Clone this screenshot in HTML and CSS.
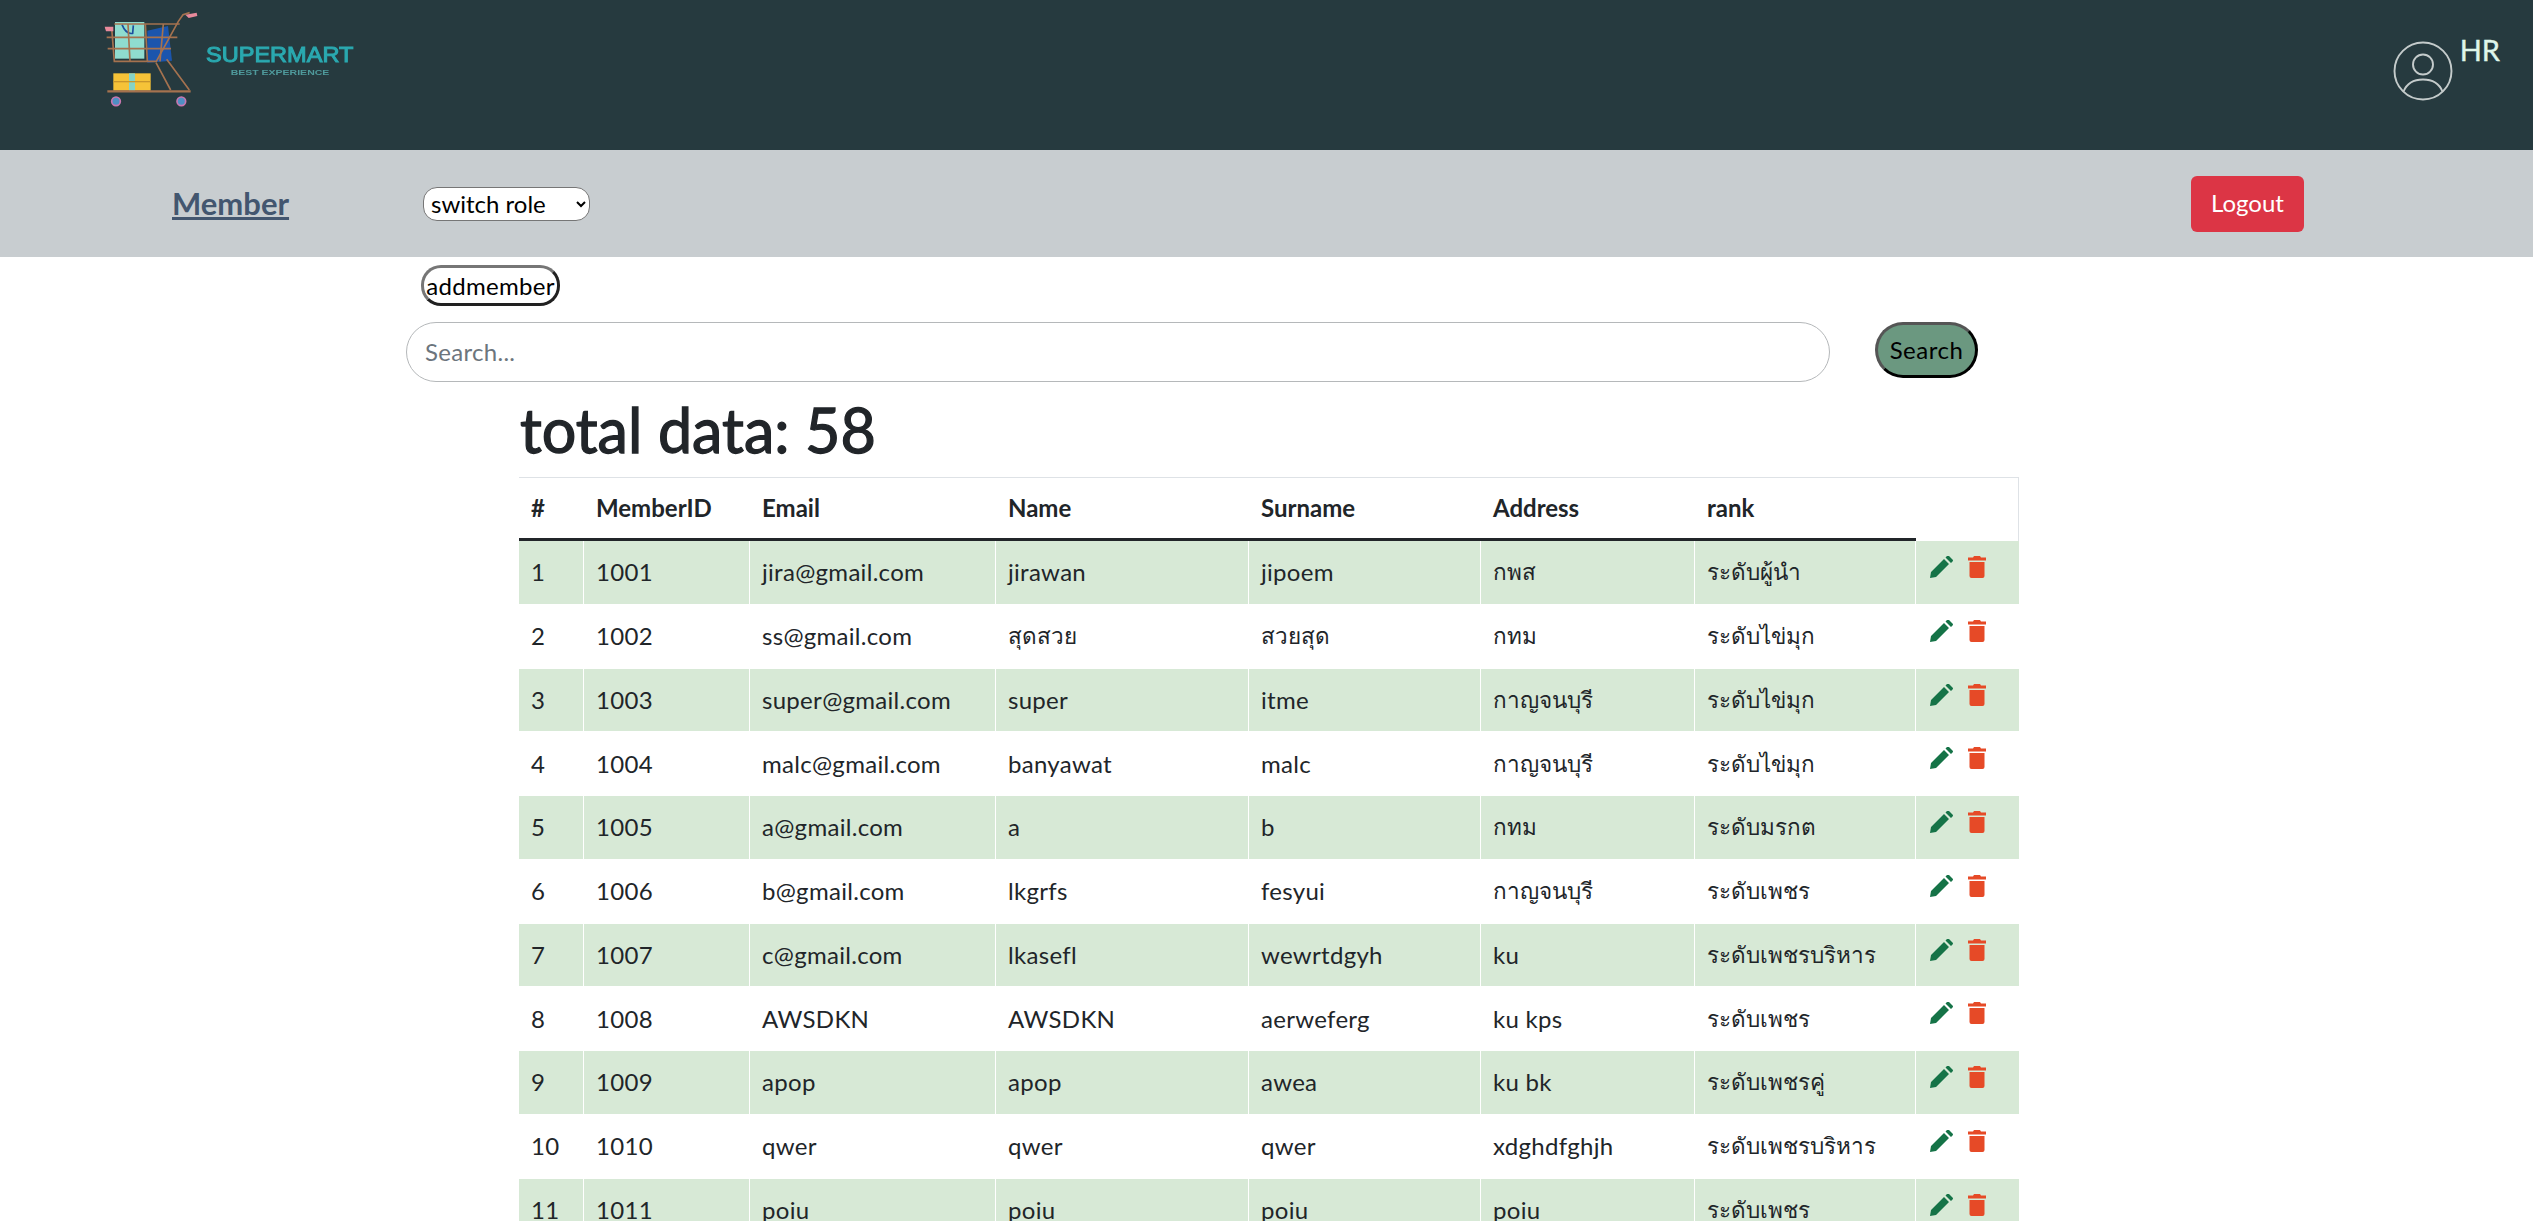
FILE: index.html
```html
<!DOCTYPE html>
<html>
    <head>
        <meta charset="utf-8">
        <title>Member</title>
        <link rel="stylesheet" href="styles.css">
    </head>
    <body>
        <div class="page">
            <header class="topbar">
                <svg class="logo" viewBox="0 0 1020 390">
                    <rect x="160" y="220" width="112" height="52" fill="#f6c338"/>
                    <rect x="207" y="220" width="18" height="52" fill="#86d3c6"/>
                    <rect x="160" y="243" width="112" height="4" fill="#c9962c"/>
                    <rect x="165" y="66" width="88" height="110" fill="#8fdccf"/>
                    <path d="M186 74q12 30 32 26l2-24" fill="none" stroke="#1d4e9e" stroke-width="5"/>
                    <path d="M262 92l62-14 12 104-74 6z" fill="#1b55ad"/>
                    <g fill="none" stroke="#a5724f" stroke-width="5">
                        <path d="M135 84h20l8 100h126l66-120 14-20 20-6"/>
                        <path d="M140 112h212M143 146h190"/>
                        <path d="M204 72l6 112M256 72l6 112M310 72l-10 112"/>
                        <path d="M163 72h196"/>
                        <path d="M288 188l44 82M320 178l68 92"/>
                        <path d="M142 274h250" stroke-width="7"/>
                    </g>
                    <path d="M134 80h26v14h-22z" fill="#e88a9c"/>
                    <path d="M376 44l34-6 2 10-26 6z" fill="#e88a9c"/>
                    <g fill="#4f8fc4" stroke="#c977b0" stroke-width="5">
                        <circle cx="168" cy="304" r="13"/>
                        <circle cx="364" cy="304" r="13"/>
                    </g>
                    <text class="logo-name" x="438" y="186" textLength="442" lengthAdjust="spacingAndGlyphs">SUPERMART</text>
                    <text class="logo-tag" x="512" y="226" textLength="296" lengthAdjust="spacingAndGlyphs">BEST EXPERIENCE</text>
                </svg>
                <div class="user">
                    <svg class="user-icon" viewBox="0 0 60 60" fill="none" stroke="#c4cbcb" stroke-width="1.9">
                        <circle cx="30" cy="30" r="28.5"/>
                        <circle cx="30" cy="23.5" r="10"/>
                        <path d="M10.5 50.5C14 42 21 38.500 30 38.500S46 42 49.500 50.500"/>
                    </svg>
                    <span class="user-role">HR</span>
                </div>
            </header>

            <nav class="navbar">
                <a class="nav-link" href="#">Member</a>
                <select class="role-select">
                    <option>switch role</option>
                </select>
                <button class="logout">Logout</button>
            </nav>

            <main class="content">
                <button class="add-member">addmember</button>
                <form class="search">
                    <input class="search-input" type="text" placeholder="Search...">
                    <button class="search-button" type="button">Search</button>
                </form>

                <h1 class="total">total data: 58</h1>

                <table class="members">
                    <colgroup>
                        <col class="c-num"><col class="c-id"><col class="c-email"><col class="c-name"><col class="c-surname"><col class="c-address"><col class="c-rank"><col class="c-actions">
                    </colgroup>
                    <thead>
                        <tr><th>#</th><th>MemberID</th><th>Email</th><th>Name</th><th>Surname</th><th>Address</th><th>rank</th><th class="blank"></th></tr>
                    </thead>
                    <tbody id="rows"></tbody>
                </table>
            </main>
        </div>
        <script src="rows.js"></script>
    </body>
</html>
```

FILE: rows.js
```js
const members = [
    ["1001", "jira@gmail.com", "jirawan", "jipoem", "กพส", "ระดับผู้นำ"],
    ["1002", "ss@gmail.com", "สุดสวย", "สวยสุด", "กทม", "ระดับไข่มุก"],
    ["1003", "super@gmail.com", "super", "itme", "กาญจนบุรี", "ระดับไข่มุก"],
    ["1004", "malc@gmail.com", "banyawat", "malc", "กาญจนบุรี", "ระดับไข่มุก"],
    ["1005", "a@gmail.com", "a", "b", "กทม", "ระดับมรกต"],
    ["1006", "b@gmail.com", "lkgrfs", "fesyui", "กาญจนบุรี", "ระดับเพชร"],
    ["1007", "c@gmail.com", "lkasefl", "wewrtdgyh", "ku", "ระดับเพชรบริหาร"],
    ["1008", "AWSDKN", "AWSDKN", "aerweferg", "ku kps", "ระดับเพชร"],
    ["1009", "apop", "apop", "awea", "ku bk", "ระดับเพชรคู่"],
    ["1010", "qwer", "qwer", "qwer", "xdghdfghjh", "ระดับเพชรบริหาร"],
    ["1011", "poiu", "poiu", "poiu", "poiu", "ระดับเพชร"]
];

const pencil = '<svg class="icon" viewBox="0 0 24 22"><path fill="#157347" d="M0 22l1-6L14 3l5 5L6 21zM15.500 1.500 17 0a1.400 1.400 0 0 1 2 0l3.500 3.500a1.400 1.400 0 0 1 0 2L21 7z"/></svg>';
const trash = '<svg class="icon trash" viewBox="0 0 18 22"><path fill="#e64a27" d="M6 0h6l1 1.500h5v3H0v-3h5zM1.500 6h15v14a2 2 0 0 1-2 2h-11a2 2 0 0 1-2-2z"/></svg>';

const cell = (v) => `<td${/[\u0E00-\u0E7F]/.test(v) ? ' class="thai"' : ""}>${v}</td>`;

document.querySelector("#rows").innerHTML = members.map((m, i) =>
    `<tr><td>${i + 1}</td>${m.map(cell).join("")}<td class="actions">${pencil}${trash}</td></tr>`
).join("");
```

FILE: styles.css
```css
html, body {
    margin: 0;
    height: 100%;
}

body {
    font-family: "Lato", "Noto Sans", "DejaVu Sans", sans-serif;
    font-size: 24px;
    line-height: 36px;
    color: #212529;
    background: #fff;
}

.page {
    height: 100vh;
    overflow: hidden;
}

.topbar {
    height: 150px;
    background: #263a3f;
    display: flex;
    justify-content: space-between;
}

.logo {
    width: 340px;
    height: 130px;
    margin-left: 60px;
    filter: blur(0.6px);
}

.logo-name {
    font-family: "Liberation Sans", sans-serif;
    font-size: 64px;
    fill: #2aa9b0;
    stroke: #2aa9b0;
    stroke-width: 3px;
}

.logo-tag {
    font-family: "Liberation Sans", sans-serif;
    font-size: 22px;
    font-weight: bold;
    fill: #4f9a9c;
}

.user {
    display: flex;
    align-items: flex-start;
    padding: 39px 33px 0 0;
}

.user-icon {
    width: 60px;
    height: 60px;
    margin-top: 2px;
}

.user-role {
    margin: -7px 0 0 7px;
    font-size: 29px;
    -webkit-text-stroke: 0.4px #dff5ea;
    color: #dff5ea;
}

.navbar {
    height: 107px;
    background: #c8cdd0;
    display: flex;
    align-items: center;
    padding-left: 172px;
    padding-right: 229px;
}

.nav-link {
    width: 251px;
    margin-bottom: 2px;
    font-size: 31px;
    font-weight: 700;
    color: #43566f;
}

.role-select {
    width: 167px;
    height: 34px;
    padding: 0 3px;
    font: inherit;
    color: #000;
    background: #fff;
    border: 1.500px solid #767676;
    border-radius: 14px;
}

.logout {
    margin-left: auto;
    width: 113px;
    height: 56px;
    padding: 0 0 2px;
    font: inherit;
    color: #fff;
    background: #dc3545;
    border: 0;
    border-radius: 6px;
}

.content {
    display: flex;
    flex-direction: column;
    align-items: flex-start;
    padding-left: 406px;
}

.add-member {
    width: 139px;
    height: 41px;
    margin: 8px 0 0 15px;
    padding: 0;
    font: inherit;
    letter-spacing: 0.3px;
    color: #000;
    background: #fff;
    border: 3px outset #767676;
    border-radius: 20px;
}

.search {
    display: flex;
    align-items: flex-start;
    gap: 45px;
    margin-top: 16px;
}

.search-input {
    width: 1424px;
    height: 60px;
    box-sizing: border-box;
    padding: 0 18px 2px;
    font: inherit;
    letter-spacing: 0.3px;
    border: 1.500px solid #b5b8ba;
    border-radius: 30px;
    outline: 0;
}

.search-input::placeholder {
    color: #6c757d;
}

.search-button {
    width: 103px;
    height: 56px;
    padding: 0;
    font: inherit;
    letter-spacing: 0.5px;
    color: #000;
    background: #6b9880;
    border: 3px outset #555;
    border-radius: 28px;
}

.total {
    margin: 12px 0 11px 114px;
    font-size: 61px;
    line-height: 72px;
    font-weight: 400;
    -webkit-text-stroke: 1.300px #212529;
    color: #212529;
}

.members {
    width: 1500px;
    margin-left: 113px;
    table-layout: fixed;
    border-collapse: separate;
    border-spacing: 0;
}

.c-num { width: 65px; }
.c-id { width: 166px; }
.c-email { width: 246px; }
.c-name { width: 253px; }
.c-surname { width: 232px; }
.c-address { width: 214px; }
.c-rank { width: 221px; }
.c-actions { width: 103px; }

.members th {
    height: 60px;
    padding: 0 12px;
    text-align: left;
    font-weight: 700;
    border-top: 1px solid #dee2e6;
    border-bottom: 3px solid #212529;
}

.members th.blank {
    border-bottom: 0;
    border-right: 1px solid #dee2e6;
}

.members td {
    height: 62.750px;
    padding: 0 12px;
    white-space: nowrap;
    letter-spacing: 0.3px;
    border-right: 1px solid #fff;
    border-bottom: 1px solid #fff;
}

.members td.thai {
    font-size: 22.500px;
    letter-spacing: 0;
}

.members tbody tr:nth-child(odd) td {
    background: #d7e9d6;
}

.members td.actions {
    padding: 0 0 0 14px;
    border-right: 0;
    vertical-align: top;
}

.icon {
    width: 24px;
    height: 22px;
    margin-top: 15px;
}

.icon.trash {
    width: 18px;
    margin-left: 14px;
}
```
